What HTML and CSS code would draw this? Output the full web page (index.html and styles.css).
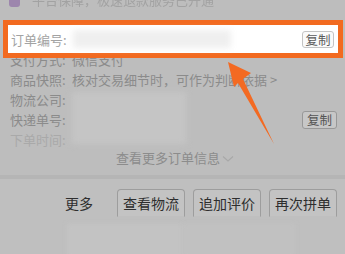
FILE: index.html
```html
<!DOCTYPE html>
<html lang="zh-CN">
<head>
<meta charset="utf-8">
<link rel="stylesheet" href="styles.css">
</head>
<body>
<div class="page">
  <div class="topline">
    <span class="shop-icon"></span>
    <span class="top-text">平台保障，极速退款服务已开通</span>
  </div>
  <div class="info">
    <div class="row"><span class="label">订单编号:</span></div>
    <div class="row"><span class="label">支付方式:</span><span class="value">微信支付</span></div>
    <div class="row"><span class="label">商品快照:</span><span class="value">核对交易细节时，可作为判断依据 &gt;</span></div>
    <div class="row"><span class="label">物流公司:</span></div>
    <div class="row"><span class="label">快递单号:</span><span class="spacer"></span><span class="copy">复制</span></div>
    <div class="row fade"><span class="label">下单时间:</span></div>
    <div class="blur-block"></div>
    <div class="more">查看更多订单信息<svg class="chev" width="12" height="8" viewBox="0 0 12 8"><path d="M1 1.5 L6 6 L11 1.5" fill="none" stroke="#a8a8a8" stroke-width="1.2"/></svg></div>
  </div>
  <div class="actions">
    <span class="more-link">更多</span>
    <span class="btn">查看物流</span>
    <span class="btn">追加评价</span>
    <span class="btn">再次拼单</span>
  </div>
  <div class="below">
    <div class="ghost g1"></div>
    <div class="ghost g2"></div>
  </div>

  <div class="highlight">
    <span class="label hl-label">订单编号:</span>
    <span class="hl-blur"></span>
    <span class="spacer"></span>
    <span class="copy hl-copy">复制</span>
  </div>
  <svg class="arrow" width="345" height="254" viewBox="0 0 345 254">
    <polygon points="228,62 251,73 243,79 274,144 238,83 234,87" fill="#f36a22"/>
  </svg>
</div>
</body>
</html>
```
FILE: styles.css
```css
* { box-sizing: border-box; }
html, body { margin: 0; padding: 0; }
body {
  width: 345px;
  height: 254px;
  overflow: hidden;
  background: #bdbdbd;
  font-family: "Noto Sans CJK SC", "Noto Sans", sans-serif;
}
.page {
  position: relative;
  width: 345px;
  height: 254px;
  overflow: hidden;
  background: #bdbdbd;
}
.topline {
  height: 30px;
  display: flex;
  align-items: flex-start;
  padding-left: 9px;
  gap: 12px;
}
.shop-icon {
  width: 11px;
  height: 11px;
  margin-top: -4px;
  border-radius: 3px;
  background: #9d86ad;
}
.top-text {
  margin-top: -8px;
  font-size: 13px;
  line-height: 16px;
  color: #a2a2a2;
  filter: blur(0.7px);
}
.info {
  position: relative;
}
.row {
  display: flex;
  align-items: center;
  height: 20px;
  padding: 0 8px 0 10px;
  font-size: 13px;
  line-height: 20px;
  color: #8b8b8b;
}
.label {
  width: 62px;
  flex: none;
}
.value { white-space: nowrap; }
.spacer { flex: 1; }
.copy {
  width: 35px;
  height: 18px;
  border: 1px solid #989898;
  border-radius: 3px;
  background: #c7c7c7;
  color: #555;
  font-size: 12.5px;
  line-height: 16px;
  text-align: center;
}
.fade { color: #a9a9a9; }
.blur-block {
  position: absolute;
  left: 72px;
  top: 62px;
  width: 114px;
  height: 52px;
  background: #c5c5c5;
  filter: blur(3px);
}
.more {
  height: 16px;
  display: flex;
  justify-content: center;
  align-items: center;
  gap: 2px;
  padding-left: 5px;
  font-size: 13px;
  line-height: 16px;
  color: #8c8c8c;
}
.chev { margin-top: 2px; }
.actions {
  margin-top: 9px;
  border-top: 4px solid #b5b5b5;
  background: #bfbfbf;
  height: 49px;
  display: flex;
  align-items: flex-start;
  padding: 10px 8px 0 65px;
  gap: 8px;
}
.more-link {
  font-size: 14px;
  line-height: 28px;
  color: #2e2e2e;
  margin-right: 16px;
}
.btn {
  width: 68px;
  height: 28px;
  border: 1px solid #9d9d9d;
  border-bottom-color: #bfbfbf;
  border-radius: 4px 4px 0 0;
  background: #c3c3c3;
  font-size: 14px;
  line-height: 26px;
  text-align: center;
  color: #2e2e2e;
}
.below {
  height: 40px;
  background: #bfbfbf;
  display: flex;
  padding: 0 0 0 67px;
}
.ghost {
  height: 34px;
  filter: blur(2px);
}
.g1 { width: 116px; background: #c3c3c3; }
.g2 { width: 112px; background: #c1c1c1; }

.highlight {
  position: absolute;
  left: 3px;
  top: 20px;
  width: 340px;
  height: 38px;
  border: 5px solid #f26a20;
  background: #ffffff;
  display: flex;
  align-items: center;
  padding: 0 4px 0 3px;
  font-size: 13px;
  color: #a3a3a3;
}
.hl-label { width: 62px; }
.hl-blur {
  width: 158px;
  height: 18px;
  background: #efefef;
  filter: blur(3px);
}
.hl-copy {
  width: 32px;
  height: 17px;
  border-color: #c4c4c4;
  background: #fafafa;
  color: #5a5a5a;
}
.arrow {
  position: absolute;
  left: 0;
  top: 0;
}
```
